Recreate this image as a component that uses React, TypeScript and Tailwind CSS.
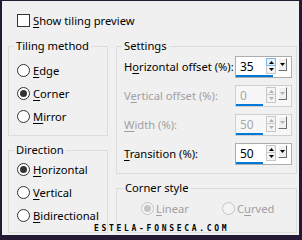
import React from "react";

const ui = "font-['Noto_Sans',sans-serif] text-[11.2px] leading-[16px]";

function U({ children }: { children: React.ReactNode }) {
  return <span className="underline underline-offset-[2px] decoration-[1px]">{children}</span>;
}

function Radio({ checked, disabled }: { checked?: boolean; disabled?: boolean }) {
  return (
    <span
      className={
        disabled
          ? "flex h-[13px] w-[13px] shrink-0 items-center justify-center rounded-full border border-[#c4c4c4] bg-[#f4f4f4]"
          : "flex h-[13px] w-[13px] shrink-0 items-center justify-center rounded-full border border-[#333333] bg-white"
      }
    >
      {checked && (
        <span
          className={
            disabled
              ? "h-[7px] w-[7px] rounded-full bg-[#c4c4c4]"
              : "h-[7px] w-[7px] rounded-full bg-[#333333]"
          }
        />
      )}
    </span>
  );
}

function RadioRow({
  label,
  checked,
}: {
  label: React.ReactNode;
  checked?: boolean;
}) {
  return (
    <div className="flex h-[23px] items-center gap-[3px]">
      <Radio checked={checked} />
      <span className="text-black">{label}</span>
    </div>
  );
}

function Tri({ up, color }: { up?: boolean; color: string }) {
  return (
    <svg width="5" height="3" viewBox="0 0 5 3">
      <polygon points={up ? "0,3 5,3 2.5,0" : "0,0 5,0 2.5,3"} fill={color} />
    </svg>
  );
}

function Spin({
  value,
  disabled,
  barW,
  hover,
}: {
  value: string;
  disabled?: boolean;
  barW: number;
  hover?: boolean;
}) {
  const c = disabled ? "#b0b0b0" : "#000000";
  return (
    <div
      className={
        disabled
          ? "flex h-[22px] w-[57px] shrink-0 border border-[#cfcfcf] bg-[#f7f7f7]"
          : "flex h-[22px] w-[57px] shrink-0 border border-[#adadad] bg-white"
      }
    >
      <div className="flex w-[30px] flex-col">
        <span
          className={
            disabled
              ? "mt-[2px] h-[16px] pl-[4px] text-[12px] text-[#a9a9a9]"
              : "mt-[2px] h-[16px] pl-[4px] text-[12px] text-black"
          }
        >
          {value}
        </span>
        <span className="h-[2px] bg-[#0078d7]" style={{ width: barW }} />
      </div>
      <div className="mt-[1px] flex w-[10px] flex-col">
        <span
          className={
            hover
              ? "flex h-[8px] items-center justify-center border border-[#7fb6ec] bg-[#e8f2fc]"
              : "flex h-[8px] items-center justify-center border border-[#c8c8c8] bg-[#f4f4f4]"
          }
        >
          <Tri up color={c} />
        </span>
        <span className="flex h-[8px] items-center justify-center border border-t-0 border-[#c8c8c8] bg-[#f4f4f4]">
          <Tri color={c} />
        </span>
      </div>
      <div className="ml-[2px] mt-[1px] flex h-[13px] w-[9px] items-start justify-center border border-b-[#6e6e6e] border-l-white border-r-[#6e6e6e] border-t-white bg-[#f0f0f0] pt-[4px]">
        <Tri color={c} />
      </div>
    </div>
  );
}

function SpinRow({
  label,
  value,
  disabled,
  barW,
  hover,
}: {
  label: React.ReactNode;
  value: string;
  disabled?: boolean;
  barW: number;
  hover?: boolean;
}) {
  return (
    <div className="flex h-[22px] items-center justify-between">
      <span className={disabled ? "whitespace-nowrap text-[#a0a0a0]" : "whitespace-nowrap text-black"}>
        {label}
      </span>
      <Spin value={value} disabled={disabled} barW={barW} hover={hover} />
    </div>
  );
}

export default function App() {
  return (
    <div
      className={`relative h-[240px] w-[302px] border-b-[5px] border-l-2 border-r-[3px] border-t border-[#241a36] bg-[#f0f0f0] ${ui}`}
    >
      <div className="ml-[15px] mt-[13px] flex h-[13px] items-center gap-[3px]">
        <span className="h-[13px] w-[13px] border border-[#333333] bg-white" />
        <span className="text-black">
          <U>S</U>how tiling preview
        </span>
      </div>

      <div className="ml-[6px] mt-[11px] flex gap-[8px]">
        <div className="flex w-[100px] flex-col gap-[6px]">
          <fieldset className="h-[98px] border border-[#dcdcdc]">
            <legend className="ml-[5px] px-[2px] text-black">Tiling method</legend>
            <div className="pl-[8px] pt-[5px]">
              <RadioRow label={<><U>E</U>dge</>} />
              <RadioRow label={<><U>C</U>orner</>} checked />
              <RadioRow label={<><U>M</U>irror</>} />
            </div>
          </fieldset>
          <fieldset className="h-[91px] border border-[#dcdcdc]">
            <legend className="ml-[5px] px-[2px] text-black">Direction</legend>
            <div className="pl-[8px]">
              <RadioRow label={<><U>H</U>orizontal</>} checked />
              <RadioRow label={<><U>V</U>ertical</>} />
              <RadioRow label={<><U>B</U>idirectional</>} />
            </div>
          </fieldset>
        </div>

        <div className="flex w-[181px] flex-col gap-[6px]">
          <fieldset className="h-[136px] border border-[#dcdcdc]">
            <legend className="ml-[5px] px-[2px] text-black">Settings</legend>
            <div className="flex flex-col gap-[7px] pl-[7px] pr-[4px] pt-[2px]">
              <SpinRow label={<>H<U>o</U>rizontal offset (%):</>} value="35" barW={37} hover />
              <SpinRow label={<>V<U>e</U>rtical offset (%):</>} value="0" barW={27} disabled />
              <SpinRow label={<><U>W</U>idth (%):</>} value="50" barW={27} disabled />
              <SpinRow label={<><U>T</U>ransition (%):</>} value="50" barW={27} />
            </div>
          </fieldset>
          <fieldset className="h-[53px] border border-[#dcdcdc]">
            <legend className="ml-[6px] px-[2px] text-black">Corner style</legend>
            <div className="flex h-[23px] items-center pl-[24px] pt-[2px]">
              <div className="flex w-[81px] items-center gap-[2px]">
                <Radio checked disabled />
                <span className="text-[#a0a0a0]">
                  <U>L</U>inear
                </span>
              </div>
              <div className="flex items-center gap-[2px]">
                <Radio disabled />
                <span className="text-[#a0a0a0]">
                  C<U>u</U>rved
                </span>
              </div>
            </div>
          </fieldset>
        </div>
      </div>

      <div className="absolute left-[92px] top-[224px] font-['DejaVu_Sans_Mono',monospace] text-[8px] font-bold leading-[8px] tracking-[2.7px] text-black [text-shadow:0_0_1px_#ffffff]">
        ESTELA-FONSECA.COM
      </div>
    </div>
  );
}
